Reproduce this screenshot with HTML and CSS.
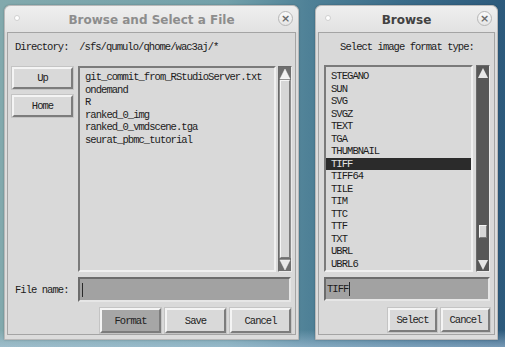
FILE: index.html
```html
<!DOCTYPE html>
<html>
<head>
<meta charset="utf-8">
<link rel="stylesheet" href="styles.css">
</head>
<body>
<div class="desktop">
  <div class="window win-left inactive">
    <div class="titlebar">
      <span class="dot"></span>
      <span class="title">Browse and Select a File</span>
      <span class="close">×</span>
    </div>
    <div class="frame frame-left">
      <div class="dirline">Directory:  /sfs/qumulo/qhome/wac3aj/*</div>
      <div class="mainrow">
        <div class="sidebtns">
          <div class="btn btn-up">Up</div>
          <div class="btn btn-home">Home</div>
        </div>
        <div class="listwrap">
          <div class="listbox list-left">
            <div class="item">git_commit_from_RStudioServer.txt</div>
            <div class="item">ondemand</div>
            <div class="item">R</div>
            <div class="item">ranked_0_img</div>
            <div class="item">ranked_0_vmdscene.tga</div>
            <div class="item">seurat_pbmc_tutorial</div>
          </div>
          <div class="scrollbar sb-left">
            <div class="arrow"><svg width="12" height="12" viewBox="0 0 12 12"><polygon points="6,1 11,11 1,11" fill="#f2f2f2" stroke="#ffffff" stroke-width="0.5"/></svg></div>
            <div class="trough"><div class="slider slider-full"></div></div>
            <div class="arrow"><svg width="12" height="12" viewBox="0 0 12 12"><polygon points="1,1 11,1 6,11" fill="#e8e8e8" stroke="#ffffff" stroke-width="0.5"/></svg></div>
          </div>
        </div>
      </div>
      <div class="filerow">
        <div class="label">File name:</div>
        <div class="entry entry-left"><span class="cursor"></span></div>
      </div>
      <div class="btnrow">
        <div class="btn btn-wide active">Format</div>
        <div class="btn btn-wide">Save</div>
        <div class="btn btn-wide">Cancel</div>
      </div>
    </div>
  </div>

  <div class="window win-right">
    <div class="titlebar">
      <span class="dot"></span>
      <span class="title">Browse</span>
      <span class="close">×</span>
    </div>
    <div class="frame frame-right">
      <div class="prompt">Select image format type:</div>
      <div class="listwrap listwrap-right">
        <div class="listbox list-right">
          <div class="item">STEGANO</div>
          <div class="item">SUN</div>
          <div class="item">SVG</div>
          <div class="item">SVGZ</div>
          <div class="item">TEXT</div>
          <div class="item">TGA</div>
          <div class="item">THUMBNAIL</div>
          <div class="item selected">TIFF</div>
          <div class="item">TIFF64</div>
          <div class="item">TILE</div>
          <div class="item">TIM</div>
          <div class="item">TTC</div>
          <div class="item">TTF</div>
          <div class="item">TXT</div>
          <div class="item">UBRL</div>
          <div class="item">UBRL6</div>
        </div>
        <div class="scrollbar sb-right">
          <div class="arrow"><svg width="12" height="12" viewBox="0 0 12 12"><polygon points="6,1 11,11 1,11" fill="#e6e6e6"/></svg></div>
          <div class="trough"><div class="slider slider-small"></div></div>
          <div class="arrow"><svg width="12" height="12" viewBox="0 0 12 12"><polygon points="1,1 11,1 6,11" fill="#e6e6e6"/></svg></div>
        </div>
      </div>
      <div class="entry entry-right"><span class="etext">TIFF</span><span class="cursor"></span></div>
      <div class="btnrow btnrow-right">
        <div class="btn btn-mid">Select</div>
        <div class="btn btn-mid">Cancel</div>
      </div>
    </div>
  </div>
</div>
</body>
</html>
```

FILE: styles.css
```css
html, body {
  margin: 0;
  padding: 0;
}
body {
  width: 505px;
  height: 347px;
  overflow: hidden;
  background:
    linear-gradient(to bottom, rgba(180, 205, 228, 0) 330px, rgba(180, 205, 228, 0.55) 347px),
    linear-gradient(to right, #82a9ad 0%, #72a0aa 45%, #4f8197 61%, #3a6c8a 80%, #2c5a7c 100%);
  font-family: "Liberation Mono", "DejaVu Sans Mono", monospace;
  font-size: 10.5px;
  letter-spacing: -0.95px;
  color: #1c1c1c;
}
.desktop {
  display: flex;
  align-items: flex-start;
  padding: 5px 0 0 4px;
  gap: 16px;
}
.window {
  background: #dcdcdc;
  border: 1px solid #b9b9b9;
  border-radius: 6px 6px 0 0;
  box-sizing: border-box;
  height: 335px;
  padding: 0 2px 5px 2px;
  display: flex;
  flex-direction: column;
  box-shadow: 0 0 2px rgba(0,0,0,0.25);
}
.win-left { width: 295px; }
.win-right { width: 183px; }

.titlebar {
  height: 26px;
  flex: none;
  display: flex;
  align-items: center;
  justify-content: center;
  position: relative;
  margin: 0 -2px;
  border-radius: 6px 6px 0 0;
  background: linear-gradient(to bottom, #efefef, #e2e2e2);
}
.title {
  font-family: "DejaVu Sans", sans-serif;
  font-weight: bold;
  font-size: 12px;
  letter-spacing: 0;
  color: #424242;
  margin-top: 1px;
}
.inactive .title { color: #8d8d8d; }
.dot {
  position: absolute;
  left: 9px;
  top: 9px;
  width: 4px;
  height: 4px;
  border-radius: 50%;
  background: #ffffff;
  border: 1px solid #d0d0d0;
}
.close {
  position: absolute;
  right: 5px;
  top: 5px;
  width: 13px;
  height: 13px;
  border-radius: 50%;
  border: 1px solid #b6b6b6;
  background: linear-gradient(to bottom, #fafafa, #e6e6e6);
  font-family: "DejaVu Sans", sans-serif;
  font-size: 11px;
  font-weight: bold;
  letter-spacing: 0;
  line-height: 13px;
  text-align: center;
  color: #6a6a6a;
}

.frame {
  flex: 1;
  background: #d9d9d9;
  border: 1px solid #a4a4a4;
  display: flex;
  flex-direction: column;
}
.frame-left { padding: 8px 3px 1px 4px; }
.frame-right { padding: 8px 4px 2px 5px; }

.dirline {
  height: 13px;
  line-height: 13px;
  white-space: pre;
  padding-left: 3px;
  margin-bottom: 12px;
}
.prompt {
  height: 13px;
  line-height: 13px;
  text-align: center;
  margin-bottom: 11px;
}

.mainrow {
  height: 206px;
  display: flex;
  gap: 5px;
}
.sidebtns {
  width: 61px;
  display: flex;
  flex-direction: column;
  gap: 6px;
  padding-top: 1px;
}

.btn {
  box-sizing: border-box;
  display: flex;
  align-items: center;
  justify-content: center;
  background: #d9d9d9;
  border: 2px solid;
  border-color: #f4f4f4 #7c7c7c #7c7c7c #f4f4f4;
  box-shadow: 0 0 0 1px #c4c4c4;
  color: #222;
}
.btn-up, .btn-home { height: 22px; }
.btn.active { background: #a6a6a6; }

.listwrap {
  flex: 1;
  display: flex;
  gap: 2px;
}
.listwrap-right {
  height: 207px;
  flex: none;
  gap: 3px;
}
.listbox {
  flex: 1;
  box-sizing: border-box;
  border: 2px solid;
  border-color: #7a7a7a #f0f0f0 #f0f0f0 #7a7a7a;
  background: #d9d9d9;
  padding-top: 3px;
  overflow: hidden;
}
.item {
  height: 12.5px;
  line-height: 12.5px;
  padding-left: 5px;
  white-space: pre;
}
.item.selected {
  background: #2b2b2b;
  color: #e4e4e4;
}

.scrollbar {
  width: 14px;
  box-sizing: border-box;
  display: flex;
  flex-direction: column;
  border: 1px solid;
  border-color: #6a6a6a #eaeaea #eaeaea #6a6a6a;
}
.sb-left { background: #8e8e8e; }
.sb-right { background: #585858; }
.arrow {
  height: 13px;
  flex: none;
  display: flex;
  align-items: center;
  justify-content: center;
  background: #6f6f6f;
}
.sb-right .arrow { background: #585858; }
.trough {
  flex: 1;
  position: relative;
}
.slider {
  box-sizing: border-box;
  background: #d6d6d6;
  border: 1px solid;
  border-color: #f6f6f6 #7a7a7a #7a7a7a #f6f6f6;
}
.slider-full {
  height: 100%;
  margin: 0 1px;
}
.slider-small {
  margin: 146px 2px 0 2px;
  height: 13px;
}

.filerow {
  height: 25px;
  margin-top: 5px;
  display: flex;
  align-items: center;
}
.label {
  width: 66px;
  padding-left: 3px;
  box-sizing: border-box;
}
.entry {
  box-sizing: border-box;
  background: #a2a2a2;
  border: 2px solid;
  border-color: #6c6c6c #e6e6e6 #e6e6e6 #6c6c6c;
  display: flex;
  align-items: center;
  padding-left: 2px;
}
.entry-left {
  width: 213px;
  height: 25px;
}
.entry-right {
  height: 24px;
  margin-top: 5px;
  padding-left: 1px;
}
.cursor {
  display: inline-block;
  width: 1px;
  height: 14px;
  background: #2a2a2a;
}
.etext { margin-right: 1px; }

.btnrow {
  height: 25px;
  margin-top: 6px;
  display: flex;
  justify-content: flex-end;
  gap: 4px;
  padding-right: 1px;
}
.btn-wide { width: 61px; }
.btnrow-right {
  height: 24px;
  margin-top: 7px;
  padding-right: 0;
}
.btn-mid { width: 49px; }
```
